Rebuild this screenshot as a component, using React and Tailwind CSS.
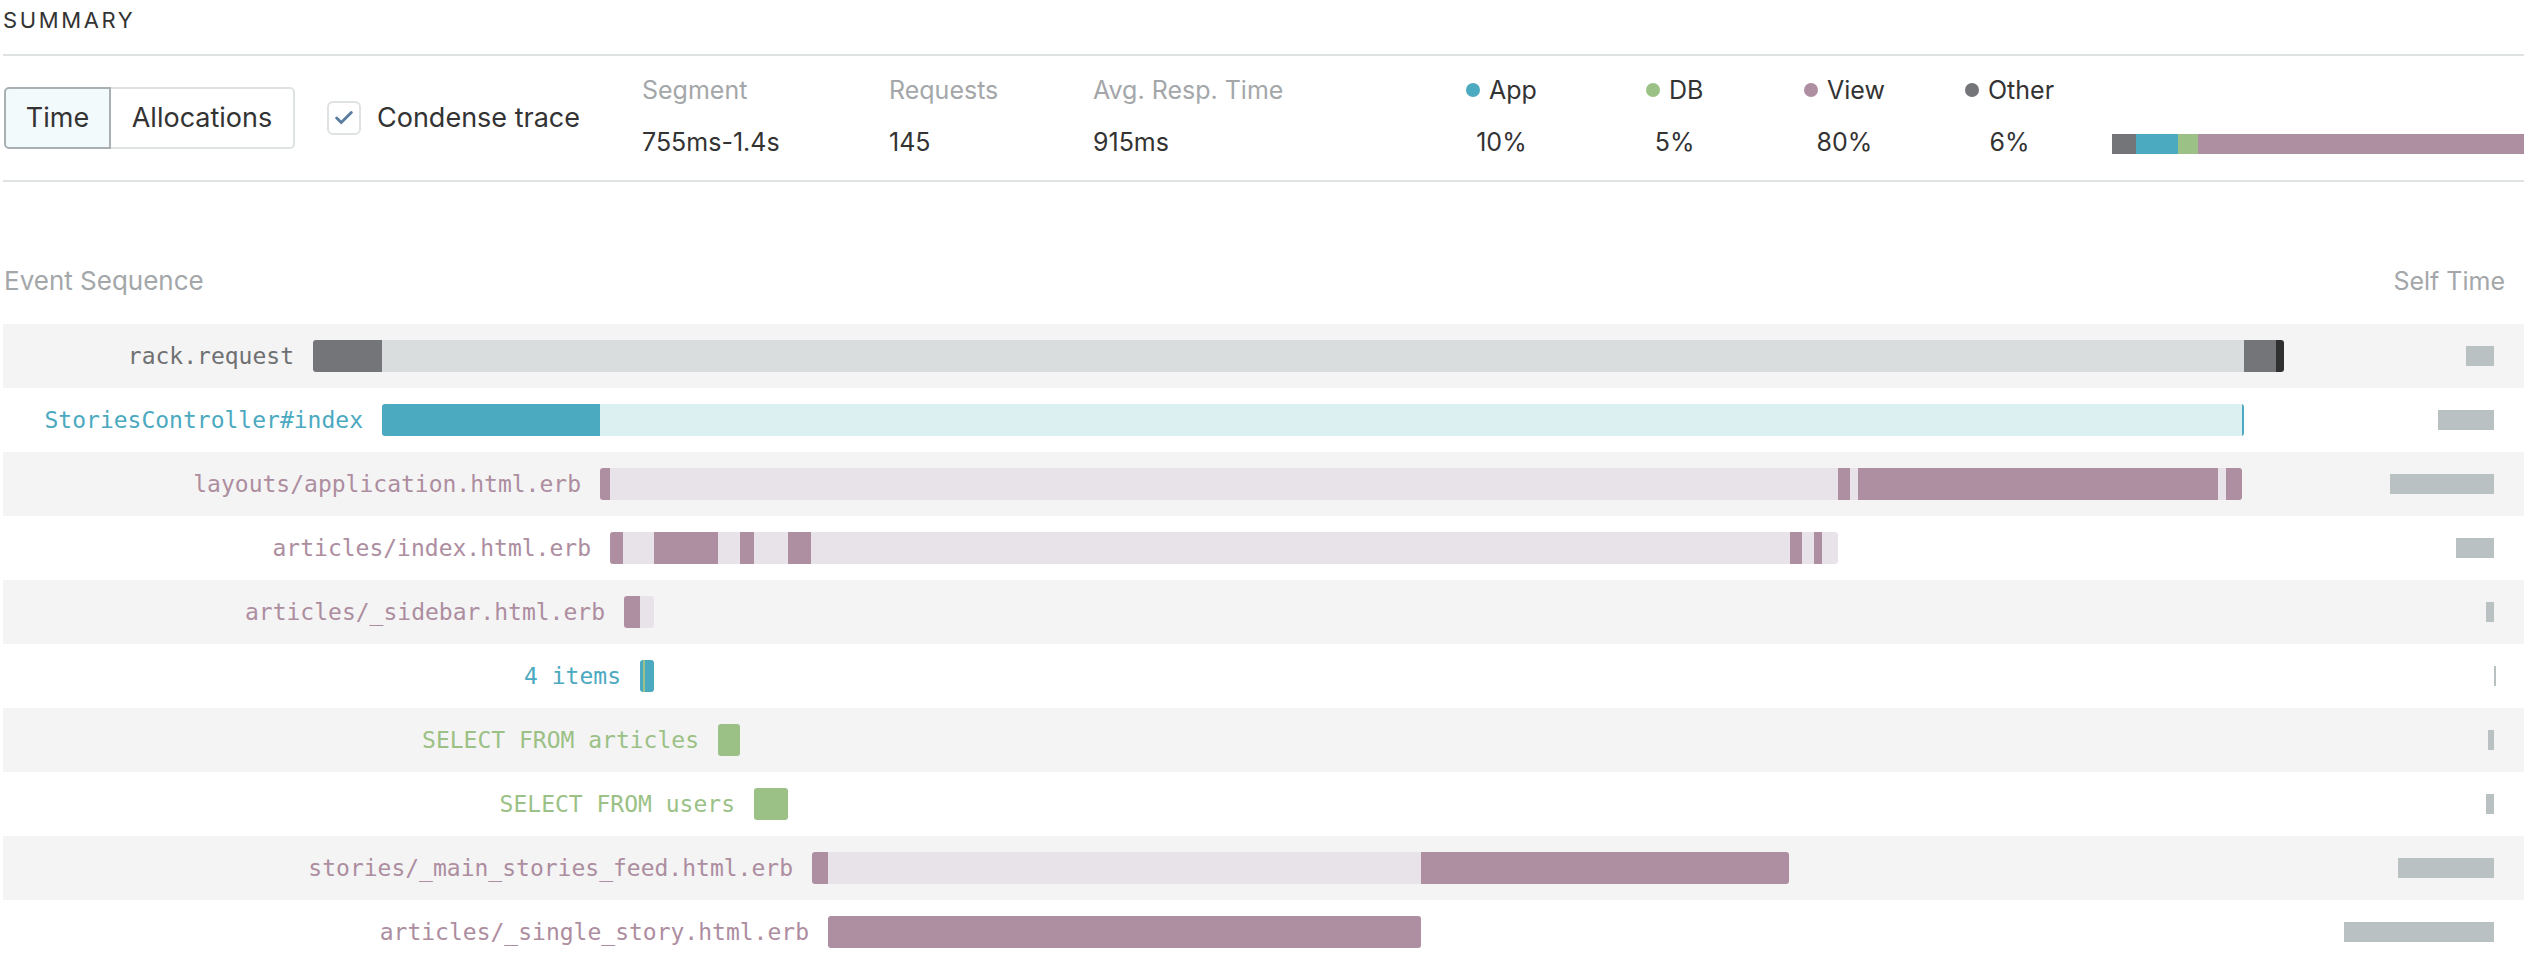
import React from 'react';
import { Check } from 'lucide-react';

const C = {
  purple: '#ae8ea1',
  purpleLight: '#e8e2e9',
  teal: '#4ba9c0',
  tealLight: '#dcf0f2',
  gray: '#747579',
  grayLight: '#dadddd',
  black: '#2f302f',
  green: '#9bc186',
};

// start = left edge of the bar on the page, segs = [width, colour]
const events = [
  { label: 'rack.request', text: 'text-[#6f7072]', start: 313, segs: [[69, C.gray], [1862, C.grayLight], [32, C.gray], [8, C.black]], self: 28 },
  { label: 'StoriesController#index', text: 'text-[#4ba9c0]', start: 382, segs: [[218, C.teal], [1642, C.tealLight], [2, C.teal]], self: 56 },
  { label: 'layouts/application.html.erb', text: 'text-[#ad8da0]', start: 600, segs: [[10, C.purple], [1228, C.purpleLight], [12, C.purple], [8, C.purpleLight], [360, C.purple], [8, C.purpleLight], [16, C.purple]], self: 104 },
  { label: 'articles/index.html.erb', text: 'text-[#ad8da0]', start: 610, segs: [[13, C.purple], [31, C.purpleLight], [64, C.purple], [22, C.purpleLight], [14, C.purple], [34, C.purpleLight], [23, C.purple], [979, C.purpleLight], [12, C.purple], [12, C.purpleLight], [8, C.purple], [16, C.purpleLight]], self: 38 },
  { label: 'articles/_sidebar.html.erb', text: 'text-[#ad8da0]', start: 624, segs: [[16, C.purple], [14, C.purpleLight]], self: 8 },
  { label: '4 items', text: 'text-[#4ba9c0]', start: 640, segs: [[3, C.teal], [2, C.green], [9, C.teal]], self: 2, selfEnd: 2496 },
  { label: 'SELECT FROM articles', text: 'text-[#9bc186]', start: 718, segs: [[22, C.green]], self: 6 },
  { label: 'SELECT FROM users', text: 'text-[#9bc186]', start: 754, segs: [[34, C.green]], self: 8 },
  { label: 'stories/_main_stories_feed.html.erb', text: 'text-[#ad8da0]', start: 812, segs: [[16, C.purple], [593, C.purpleLight], [368, C.purple]], self: 96 },
  { label: 'articles/_single_story.html.erb', text: 'text-[#ad8da0]', start: 828, segs: [[593, C.purple]], self: 150 },
];

const legend = [
  { name: 'App', pct: '10%', dot: 'bg-[#4ba9c0]', w: 'w-[180px]' },
  { name: 'DB', pct: '5%', dot: 'bg-[#9bc186]', w: 'w-[158px]' },
  { name: 'View', pct: '80%', dot: 'bg-[#ae8ea1]', w: 'w-[161px]' },
  { name: 'Other', pct: '6%', dot: 'bg-[#747579]', w: 'w-[147px]' },
];

const Stat = ({ label, value, w }) => (
  <div className={`${w} flex flex-col gap-[22px]`}>
    <span className="text-[25px] leading-[30px] text-[#a4a7a9]">{label}</span>
    <span className="text-[25px] leading-[30px] text-[#333]">{value}</span>
  </div>
);

const EventRow = ({ ev, odd }) => {
  const pageRight = 2524;
  const selfEnd = ev.selfEnd || 2494;
  return (
    <div className={`flex h-[64px] items-center ${odd ? 'bg-[#f4f4f4]' : 'bg-white'}`}>
      <div className="flex flex-1 items-center">
        <div
          className={`shrink-0 whitespace-nowrap pr-[19px] text-right font-['DejaVu_Sans_Mono',monospace] text-[23px] ${ev.text}`}
          style={{ width: ev.start - 3 }}
        >
          {ev.label}
        </div>
        <div className="flex h-[32px] overflow-hidden rounded-[3px]">
          {ev.segs.map(([w, c], i) => (
            <div key={i} className="h-full" style={{ width: w, backgroundColor: c }} />
          ))}
        </div>
      </div>
      <div className="flex justify-end" style={{ paddingRight: pageRight - selfEnd }}>
        <div className="h-[20px] bg-[#b9c1c3]" style={{ width: ev.self }} />
      </div>
    </div>
  );
};

export default function App() {
  return (
    <div className="min-h-screen bg-white pl-[3px] pr-[6px] font-['Inter',sans-serif] text-[#333]">
      <div className="pt-[7px] text-[22px] leading-[26px] tracking-[2.6px] text-[#333]">SUMMARY</div>
      <div className="mt-[21px] h-[2px] bg-[#dfe2e2]" />

      <div className="flex h-[124px] items-center">
        <div className="flex w-[639px] shrink-0 items-center">
          <div className="ml-[1px] flex h-[62px]">
            <button className="h-full w-[107px] rounded-l-[5px] border-2 border-[#a9b0b3] bg-[#f3fafc] text-[27px] text-[#333]">
              Time
            </button>
            <button className="h-full w-[184px] rounded-r-[5px] border-2 border-l-0 border-[#dfe2e3] bg-white text-[27px] text-[#333]">
              Allocations
            </button>
          </div>
          <div className="ml-[32px] flex h-[34px] w-[34px] items-center justify-center rounded-[6px] border-2 border-[#dfe2e3]">
            <Check size={22} strokeWidth={3.2} color="#5b7ea0" />
          </div>
          <span className="ml-[16px] text-[27px] text-[#333]">Condense trace</span>
        </div>

        <div className="mt-[19px] flex flex-1 items-start self-start">
          <Stat label="Segment" value="755ms-1.4s" w="w-[247px]" />
          <Stat label="Requests" value="145" w="w-[204px]" />
          <Stat label="Avg. Resp. Time" value="915ms" w="w-[373px]" />
          {legend.map((l) => (
            <div key={l.name} className={`${l.w} shrink-0`}>
              <div className="inline-flex flex-col items-center gap-[22px]">
                <div className="flex items-center gap-[9px] text-[25px] leading-[30px]">
                  <span className={`h-[14px] w-[14px] rounded-full ${l.dot}`} />
                  <span>{l.name}</span>
                </div>
                <span className="text-[25px] leading-[30px]">{l.pct}</span>
              </div>
            </div>
          ))}
          <div className="mt-[59px] flex h-[20px] flex-1">
            <div className="h-full w-[24px] bg-[#747579]" />
            <div className="h-full w-[42px] bg-[#4ba9c0]" />
            <div className="h-full w-[20px] bg-[#9bc186]" />
            <div className="h-full flex-1 bg-[#ae8ea1]" />
          </div>
        </div>
      </div>
      <div className="h-[2px] bg-[#dfe2e2]" />

      <div className="mt-[84px] flex items-center justify-between pr-[19px] text-[26px] leading-[30px] text-[#a4a7a9]">
        <span className="pl-[1px]">Event Sequence</span>
        <span className="text-[25px]">Self Time</span>
      </div>

      <div className="mt-[28px]">
        {events.map((ev, i) => (
          <EventRow key={ev.label} ev={ev} odd={i % 2 === 0} />
        ))}
      </div>
    </div>
  );
}
